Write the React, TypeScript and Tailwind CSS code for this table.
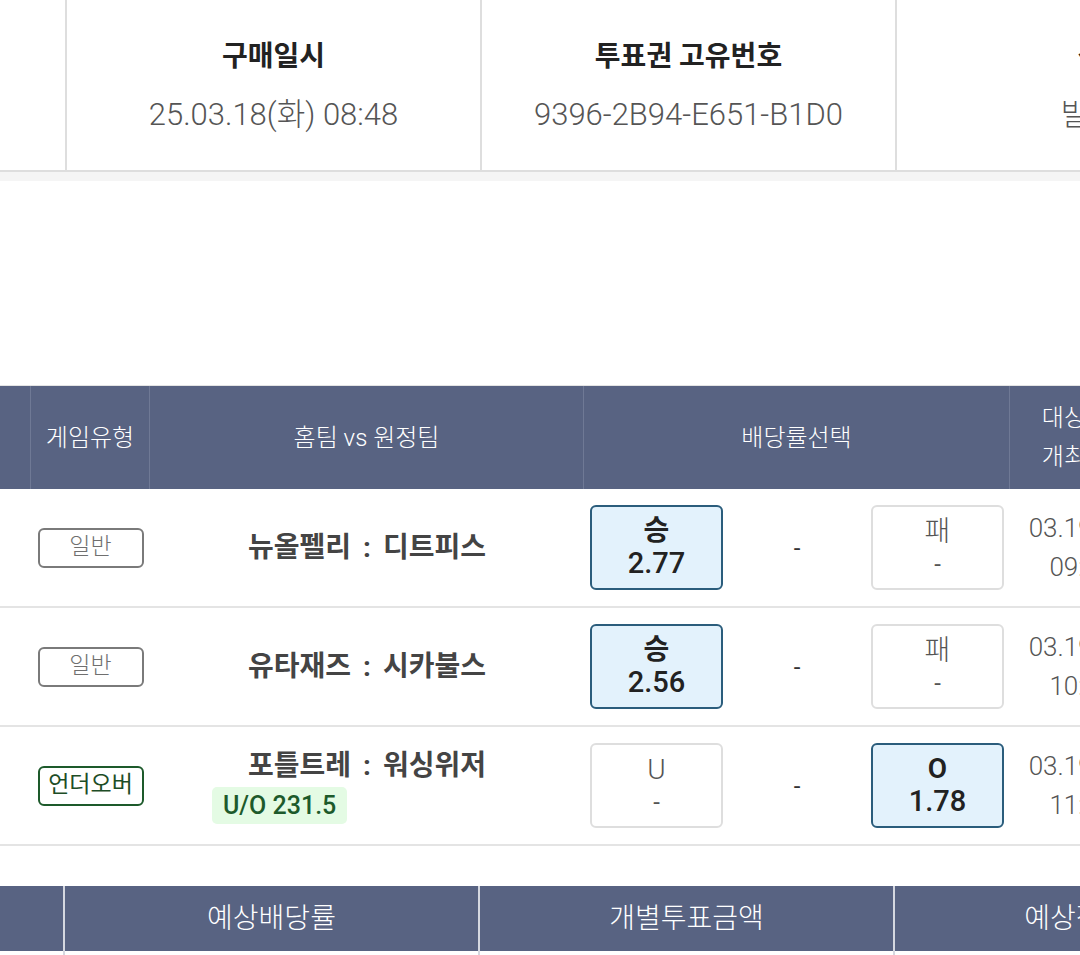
import React from "react";

type Pick = { label: string; odds: string; selected?: boolean };

type Game = {
  type: string;
  overUnder?: boolean;
  home: string;
  away: string;
  line?: string;
  left: Pick;
  draw: string;
  right: Pick;
  date: string;
  time: string;
};

const games: Game[] = [
  {
    type: "일반",
    home: "뉴올펠리",
    away: "디트피스",
    left: { label: "승", odds: "2.77", selected: true },
    draw: "-",
    right: { label: "패", odds: "-" },
    date: "03.19(수)",
    time: "09:00",
  },
  {
    type: "일반",
    home: "유타재즈",
    away: "시카불스",
    left: { label: "승", odds: "2.56", selected: true },
    draw: "-",
    right: { label: "패", odds: "-" },
    date: "03.19(수)",
    time: "10:00",
  },
  {
    type: "언더오버",
    overUnder: true,
    home: "포틀트레",
    away: "워싱위저",
    line: "U/O 231.5",
    left: { label: "U", odds: "-" },
    draw: "-",
    right: { label: "O", odds: "1.78", selected: true },
    date: "03.19(수)",
    time: "11:00",
  },
];

function PickBox({ pick }: { pick: Pick }) {
  return pick.selected ? (
    <div className="flex h-[85px] w-[133px] flex-col items-center justify-center rounded-[6px] border-2 border-[#2b5d7c] bg-[#e3f2fc] text-[#222]">
      <span className="text-[28px] font-semibold leading-[30px]">{pick.label}</span>
      <span className="text-[29px] font-medium leading-[34px]">{pick.odds}</span>
    </div>
  ) : (
    <div className="flex h-[85px] w-[133px] flex-col items-center justify-center rounded-[6px] border-2 border-[#dedede] bg-white text-[#555]">
      <span className="text-[28px] font-light leading-[32px]">{pick.label}</span>
      <span className="text-[24px] leading-[32px]">{pick.odds}</span>
    </div>
  );
}

function TopCell({ title, value }: { title: string; value: string }) {
  return (
    <div className="flex w-[415px] shrink-0 flex-col items-center border-r-2 border-[#dedede] pt-[37px]">
      <div className="text-[28px] font-bold leading-[40px] text-[#222]">{title}</div>
      <div className="mt-[17px] text-[31px] font-light leading-[42px] text-[#555]">{value}</div>
    </div>
  );
}

export default function App() {
  return (
    <div className="h-[955px] w-[1080px] overflow-hidden bg-white font-['Roboto','Noto_Sans_CJK_KR',sans-serif]">
      {/* ticket info */}
      <div className="flex h-[172px] w-[1400px] border-b-2 border-[#dedede]">
        <div className="w-[67px] shrink-0 border-r-2 border-[#dedede]" />
        <TopCell title="구매일시" value="25.03.18(화) 08:48" />
        <TopCell title="투표권 고유번호" value="9396-2B94-E651-B1D0" />
        <TopCell title="상태" value="발매중" />
      </div>
      <div className="h-[9px] bg-[#f5f5f5]" />

      <div className="h-[204px]" />

      {/* games */}
      <div className="w-[1200px] border-t border-[#e4e4e4]">
        <div className="flex h-[103px] bg-[#586382] text-[24px] font-light text-white">
          <div className="w-[31px] shrink-0 border-r border-[#6f7995]" />
          <div className="flex w-[119px] shrink-0 items-center justify-center border-r border-[#6f7995]">게임유형</div>
          <div className="flex w-[434px] shrink-0 items-center justify-center border-r border-[#6f7995]">홈팀 vs 원정팀</div>
          <div className="flex w-[426px] shrink-0 items-center justify-center border-r border-[#6f7995]">배당률선택</div>
          <div className="flex w-[152px] shrink-0 flex-col items-center justify-center leading-[39px]">
            <span>대상경기</span>
            <span>개최일시</span>
          </div>
        </div>

        {games.map((g, i) => (
          <div key={i} className="flex h-[119px] border-b-2 border-[#e4e4e4]">
            <div className="w-[31px] shrink-0" />
            <div className="flex w-[119px] shrink-0 items-center justify-center">
              {g.overUnder ? (
                <span className="flex h-[40px] w-[106px] items-center justify-center rounded-[6px] border-2 border-[#1d5a2b] text-[23px] text-[#1d4d26]">
                  {g.type}
                </span>
              ) : (
                <span className="flex h-[40px] w-[106px] items-center justify-center rounded-[6px] border-2 border-[#7a7a7a] text-[23px] font-light text-[#6f6f6f]">
                  {g.type}
                </span>
              )}
            </div>
            <div className="flex w-[434px] shrink-0 flex-col justify-center">
              <div className="flex items-center justify-center text-[28px] font-bold leading-[36px] text-[#444]">
                <span>{g.home}</span>
                <span className="mx-[12px]">:</span>
                <span>{g.away}</span>
              </div>
              {g.line && (
                <div className="ml-[62px] mt-[3px] self-start rounded-[5px] bg-[#e4fbe4] px-[11px] text-[25px] font-medium leading-[37px] text-[#1d5a2b]">
                  {g.line}
                </div>
              )}
            </div>
            <div className="flex w-[426px] shrink-0 items-center justify-between px-[6px]">
              <PickBox pick={g.left} />
              <span className="text-[24px] text-[#333]">{g.draw}</span>
              <PickBox pick={g.right} />
            </div>
            <div className="flex w-[142px] shrink-0 flex-col items-center justify-center text-[26px] font-light leading-[39px] text-[#555]">
              <span>{g.date}</span>
              <span>{g.time}</span>
            </div>
          </div>
        ))}
      </div>

      <div className="h-[40px]" />

      {/* summary */}
      <div className="flex h-[70px] w-[1400px]">
        <div className="w-[65px] shrink-0 border-r-2 border-[#d5d8e0]">
          <div className="h-[65px] bg-[#586382]" />
        </div>
        {["예상배당률", "개별투표금액", "예상적중금액"].map((t) => (
          <div key={t} className="w-[415px] shrink-0 border-r-2 border-[#d5d8e0]">
            <div className="flex h-[65px] items-center justify-center bg-[#586382] text-[28px] font-light text-white">{t}</div>
          </div>
        ))}
      </div>
    </div>
  );
}
